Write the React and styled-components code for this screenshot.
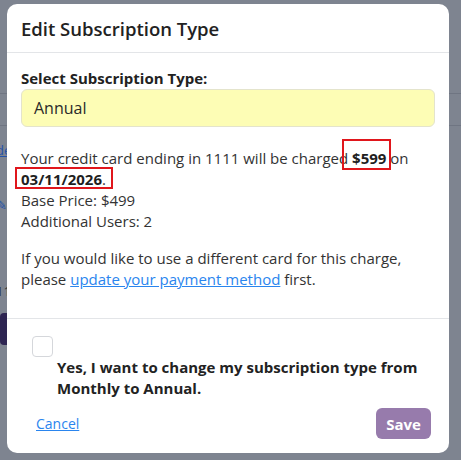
import React from "react";
import styled, { createGlobalStyle } from "styled-components";

const GlobalStyle = createGlobalStyle`
  html, body {
    margin: 0;
    padding: 0;
    background: #7e8490;
    font-family: "Open Sans", "Noto Sans", Arial, sans-serif;
    color: #212529;
  }
  * { box-sizing: border-box; }
`;

const Page = styled.div`
  position: relative;
  width: 461px;
  height: 460px;
  overflow: hidden;
  background: #7e8490;
`;

/* bits of the page that peek out behind the dialog */
const Behind = styled.div`
  position: absolute;
  left: 0;
  top: 0;
  width: 461px;
  height: 460px;
`;

const BehindRule = styled.div`
  position: absolute;
  left: 0;
  right: 0;
  top: ${(p) => p.top}px;
  height: 1px;
  background: #6f7582;
`;

const BehindText = styled.span`
  position: absolute;
  left: -4px;
  top: ${(p) => p.top}px;
  font-size: 13px;
  color: ${(p) => p.color || "#2c2f36"};
  text-decoration: ${(p) => (p.link ? "underline" : "none")};
`;

const BehindBar = styled.div`
  position: absolute;
  left: 0;
  top: 313px;
  width: 12px;
  height: 32px;
  border-radius: 4px;
  background: #2e2552;
`;

const Dialog = styled.div`
  position: absolute;
  left: 7px;
  top: 4px;
  width: 442px;
  background: #fff;
  border-radius: 10px;
  display: flex;
  flex-direction: column;
  overflow: hidden;
`;

const Header = styled.div`
  flex-shrink: 0;
  height: 49px;
  padding: 0 14px;
  display: flex;
  align-items: center;
  border-bottom: 1px solid #e3e5e8;
`;

const Title = styled.h2`
  margin: 0;
  font-size: 18.5px;
  font-weight: 600;
  color: #222;
`;

const Body = styled.div`
  flex-shrink: 0;
  padding: 14px 14px 12px;
  border-bottom: 1px solid #e3e5e8;
`;

const Label = styled.div`
  font-size: 15px;
  font-weight: 700;
  line-height: 22px;
  color: #222;
`;

const Select = styled.div`
  height: 38px;
  margin-bottom: 21px;
  padding: 0 12px;
  display: flex;
  align-items: center;
  background: #fdfdb5;
  border: 1px solid #e4e4cc;
  border-radius: 6px;
  font-size: 16px;
  color: #2a2a2a;
`;

const Para = styled.p`
  margin: 0 0 16px;
  font-size: 15px;
  line-height: 21px;
  color: #333;
`;

/* red highlight rectangle drawn over a value */
const Boxed = styled.b`
  position: relative;
  color: #1f1f1f;

  &::after {
    content: "";
    position: absolute;
    top: ${(p) => p.t}px;
    right: ${(p) => p.r}px;
    bottom: ${(p) => p.b}px;
    left: ${(p) => p.l}px;
    border: 2px solid #e0161c;
    pointer-events: none;
  }
`;

const Link = styled.a`
  color: #2a85ee;
  text-decoration: underline;
`;

const Footer = styled.div`
  flex-shrink: 0;
  padding: 17px 18px 14px 25px;
  display: flex;
  flex-direction: column;
`;

const Check = styled.div`
  width: 21px;
  height: 21px;
  border: 1px solid #d5d7db;
  border-radius: 4px;
  background: #fff;
`;

const CheckLabel = styled.div`
  margin: 0 0 9px 25px;
  font-size: 15px;
  font-weight: 700;
  line-height: 21px;
  color: #222;
`;

const Actions = styled.div`
  display: flex;
  align-items: center;
  justify-content: space-between;
  padding-left: 4px;
`;

const Cancel = styled.a`
  font-size: 14px;
  color: #2a85ee;
  text-decoration: underline;
`;

const Save = styled.button`
  width: 55px;
  height: 31px;
  border: none;
  border-radius: 6px;
  background: #977bac;
  color: #fff;
  font-family: inherit;
  font-size: 15px;
  font-weight: 700;
`;

export default function App() {
  return (
    <Page>
      <GlobalStyle />
      <Behind>
        <BehindRule top={93} />
        <BehindRule top={125} />
        <BehindText top={141} color="#2452a8" link>
          de
        </BehindText>
        <BehindText top={196} color="#2452a8">
          ✎
        </BehindText>
        <BehindText top={282}>11</BehindText>
        <BehindBar />
      </Behind>
      <Dialog>
        <Header>
          <Title>Edit Subscription Type</Title>
        </Header>
        <Body>
          <Label>Select Subscription Type:</Label>
          <Select>Annual</Select>
          <Para>
            Your credit card ending in 1111 will be charged{" "}
            <Boxed t={-9} r={-5} b={-2} l={-10}>
              $599
            </Boxed>{" "}
            on
            <br />
            <Boxed t={-2} r={-11} b={0} l={-6}>
              03/11/2026
            </Boxed>
            .
            <br />
            Base Price: $499
            <br />
            Additional Users: 2
          </Para>
          <Para>
            If you would like to use a different card for this charge,
            <br />
            please <Link href="#">update your payment method</Link> first.
          </Para>
        </Body>
        <Footer>
          <Check />
          <CheckLabel>
            Yes, I want to change my subscription type from
            <br />
            Monthly to Annual.
          </CheckLabel>
          <Actions>
            <Cancel href="#">Cancel</Cancel>
            <Save>Save</Save>
          </Actions>
        </Footer>
      </Dialog>
    </Page>
  );
}
